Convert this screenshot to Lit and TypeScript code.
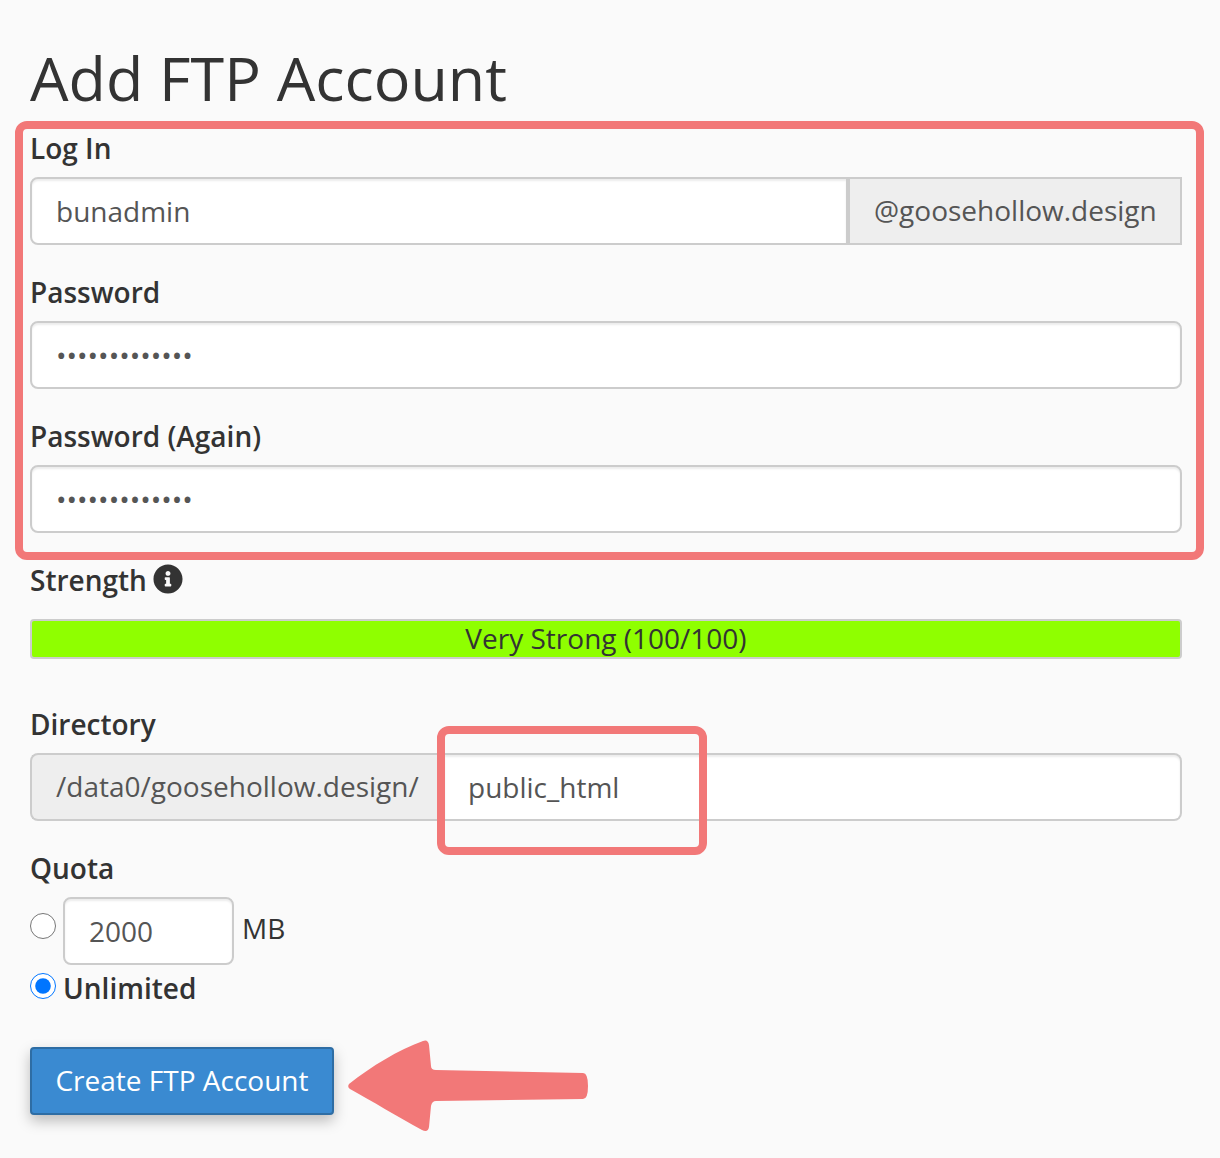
import { LitElement, html, css } from "lit";
import { customElement } from "lit/decorators.js";

@customElement("app-root")
export class AppRoot extends LitElement {
  static styles = css`
    :host {
      display: block;
      position: relative;
      box-sizing: border-box;
      height: 1158px;
      padding: 38px 38px 0 30px;
      background: #fafafa;
      color: #333;
      font-family: "Open Sans", sans-serif;
      font-size: 28px;
      overflow: hidden;
    }
    h1 {
      margin: 0 0 11px;
      font-size: 61px;
      font-weight: 400;
      line-height: 80px;
    }
    .group { margin-bottom: 28px; }
    label, .label {
      display: block;
      height: 40px;
      line-height: 38px;
      margin-bottom: 8px;
      font-weight: 600;
    }
    .row { display: flex; height: 68px; }
    input[type="text"], input[type="password"] {
      box-sizing: border-box;
      height: 68px;
      width: 100%;
      min-width: 0;
      flex: 1;
      padding: 0 24px;
      border: 2px solid #ccc;
      border-radius: 8px;
      background: #fff;
      box-shadow: inset 0 2px 2px rgba(0, 0, 0, 0.075);
      color: #555;
      font: 400 28px "Open Sans", sans-serif;
      outline: none;
    }
    .addon {
      box-sizing: border-box;
      display: flex;
      align-items: center;
      height: 68px;
      padding: 0 24px 2px;
      border: 2px solid #ccc;
      background: #eee;
      color: #555;
      white-space: nowrap;
    }
    .after { border-radius: 8px 0 0 8px !important; }
    .before {
      border-radius: 0 8px 8px 0 !important;
      border-left: 0 !important;
      padding-left: 23px !important;
    }
    .addon-right { width: 334px; }
    .addon-left { width: 415px; border-radius: 8px 0 0 8px; border-right: 0; }
    .strength {
      display: flex;
      align-items: center;
      gap: 6px;
      height: 40px;
      margin-bottom: 18px;
      font-weight: 600;
      line-height: 38px;
    }
    .strength span { height: 40px; }
    .strength svg { width: 30px; height: 30px; fill: #333; margin-top: -4px; }
    .bar {
      box-sizing: border-box;
      height: 40px;
      margin-bottom: 46px;
      border: 2px solid #ccc;
      border-radius: 4px;
      background: #8fff00;
      color: #333;
      text-align: center;
      line-height: 34px;
    }
    .quota { display: flex; align-items: flex-start; height: 68px; }
    input[type="radio"] {
      flex: none;
      width: 26px;
      height: 26px;
      margin: 0 7px 0 0;
    }
    .quota input[type="radio"] { margin-top: 16px; }
    .quota input[type="text"] {
      flex: none;
      width: 171px;
      padding-right: 10px;
    }
    .mb { margin-left: 8px; height: 64px; line-height: 62px; }
    .unlimited {
      display: flex;
      align-items: center;
      height: 40px;
      margin: 4px 0 38px;
      font-weight: 600;
    }
    .unlimited input[type="radio"] { margin-top: -6px; }
    .unlimited span { height: 40px; line-height: 38px; }
    button {
      box-sizing: border-box;
      display: block;
      width: 304px;
      height: 68px;
      padding: 0 0 3px;
      border: 2px solid #2e6da4;
      border-radius: 4px;
      background: #3a8ad1;
      box-shadow: 0 6px 14px rgba(0, 0, 0, 0.25);
      color: #fff;
      font: 400 28px "Open Sans", sans-serif;
    }
    .hl {
      position: absolute;
      box-sizing: border-box;
      border: 8px solid #f27878;
      border-radius: 12px;
      pointer-events: none;
    }
    .hl-a { left: 15px; top: 121px; width: 1189px; height: 439px; }
    .hl-b { left: 437px; top: 726px; width: 270px; height: 129px; }
    .arrow {
      position: absolute;
      left: 340px;
      top: 1030px;
      width: 260px;
      height: 110px;
      fill: #f27878;
    }
  `;

  render() {
    return html`
      <h1>Add FTP Account</h1>
      <div class="group">
        <label>Log In</label>
        <div class="row">
          <input class="after" type="text" .value=${"bunadmin"} />
          <div class="addon addon-right">@goosehollow.design</div>
        </div>
      </div>
      <div class="group">
        <label>Password</label>
        <input type="password" .value=${"passwordpasss"} />
      </div>
      <div class="group">
        <label>Password (Again)</label>
        <input type="password" .value=${"passwordpasss"} />
      </div>
      <div class="strength">
        <span>Strength</span>
        <svg viewBox="0 0 512 512" aria-hidden="true">
          <path d="M256 8C119.043 8 8 119.083 8 256c0 136.997 111.043 248 248 248s248-111.003 248-248C504 119.083 392.957 8 256 8zm0 110c23.196 0 42 18.804 42 42s-18.804 42-42 42-42-18.804-42-42 18.804-42 42-42zm56 254c0 6.627-5.373 12-12 12h-88c-6.627 0-12-5.373-12-12v-24c0-6.627 5.373-12 12-12h12v-64h-12c-6.627 0-12-5.373-12-12v-24c0-6.627 5.373-12 12-12h64c6.627 0 12 5.373 12 12v100h12c6.627 0 12 5.373 12 12v24z" />
        </svg>
      </div>
      <div class="bar">Very Strong (100/100)</div>
      <div class="group">
        <label>Directory</label>
        <div class="row">
          <div class="addon addon-left">/data0/goosehollow.design/</div>
          <input class="before" type="text" .value=${"public_html"} />
        </div>
      </div>
      <div class="label">Quota</div>
      <div class="quota">
        <input type="radio" name="quota" />
        <input type="text" .value=${"2000"} />
        <span class="mb">MB</span>
      </div>
      <div class="unlimited">
        <input type="radio" name="quota" checked />
        <span>Unlimited</span>
      </div>
      <button>Create FTP Account</button>
      <div class="hl hl-a"></div>
      <div class="hl hl-b"></div>
      <svg class="arrow" viewBox="340 1030 260 110" aria-hidden="true">
        <path d="M349 1084 C372 1066 398 1050 423 1041 Q428 1039 429 1045 L431 1066 Q431 1070 436 1070 L583 1073 Q588 1073 588 1086 Q588 1099 583 1099 L436 1101 Q432 1101 431 1106 L429 1127 Q428 1133 422 1130 C398 1117 372 1101 350 1089 Q347 1087 349 1084 Z" />
      </svg>
    `;
  }
}
